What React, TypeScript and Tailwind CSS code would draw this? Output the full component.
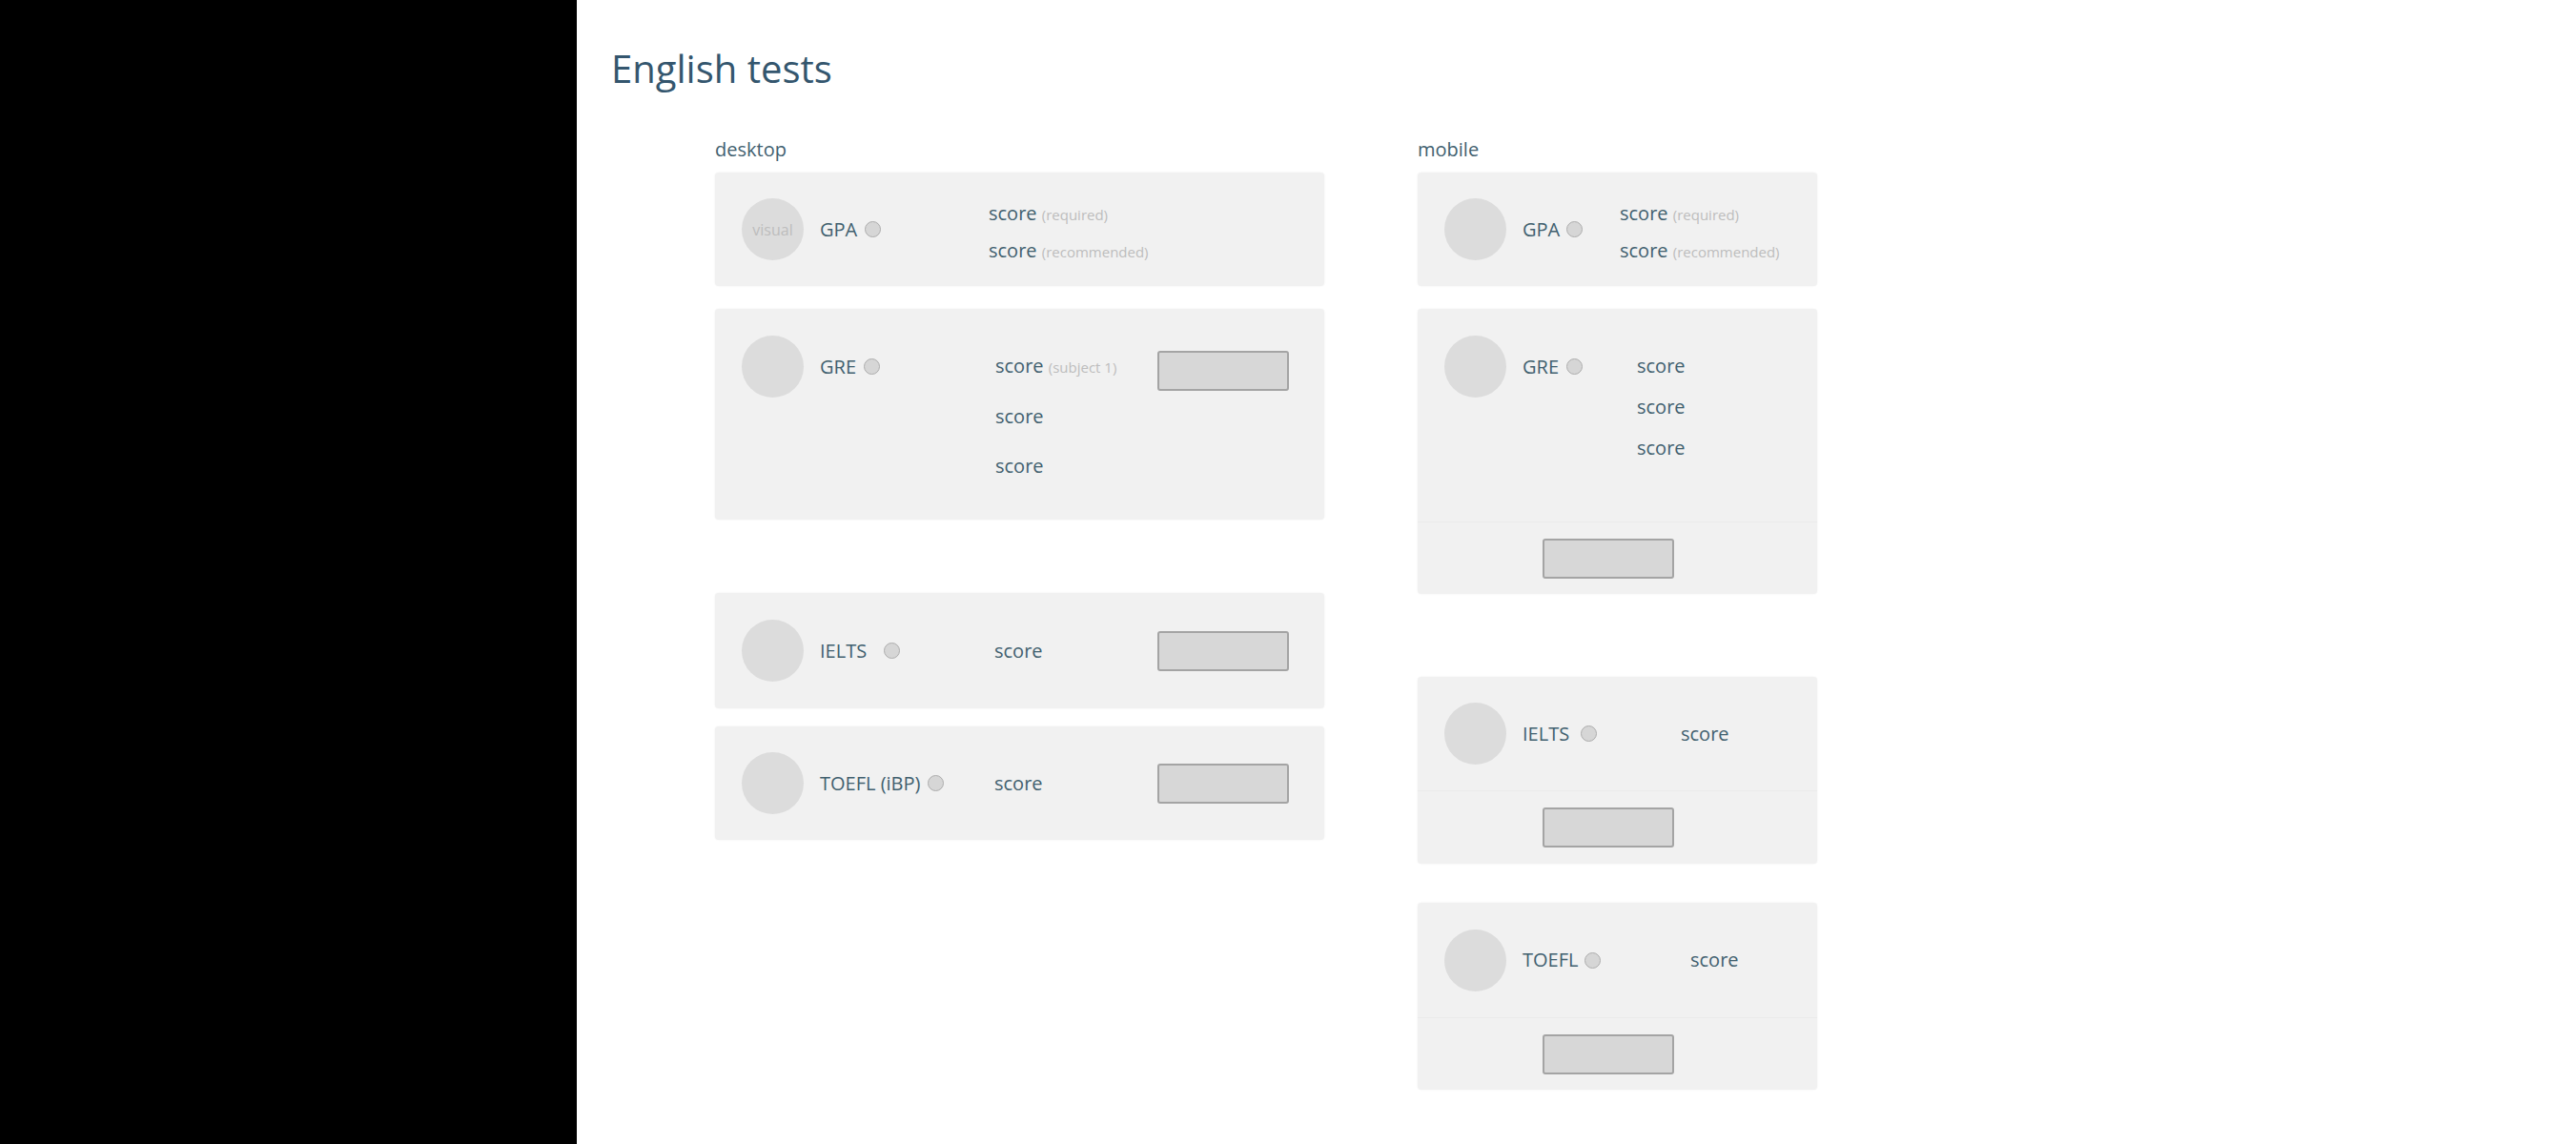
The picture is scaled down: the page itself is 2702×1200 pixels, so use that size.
const ink = "text-[#41606f]";

const Avatar = ({ label }: { label?: string }) => (
  <div className="w-[65px] h-[65px] shrink-0 rounded-full bg-[#dcdcdc] flex items-center justify-center text-[16px] text-[#bdbdbd]">
    {label}
  </div>
);

const Radio = ({ gap }: { gap: string }) => (
  <span className={`${gap} w-[17px] h-[17px] shrink-0 rounded-full bg-[#d6d6d6] border-[1.5px] border-[#adadad]`} />
);

const TestName = ({ name, width, gap = "ml-[8px]" }: { name: string; width: string; gap?: string }) => (
  <div className={`${width} ml-[17px] h-[65px] shrink-0 flex items-center ${ink}`}>
    <span>{name}</span>
    <Radio gap={gap} />
  </div>
);

const Note = ({ children }: { children: string }) => (
  <span className="text-[15px] text-[#bdbdbd]">{children}</span>
);

const Field = ({ extra = "" }: { extra?: string }) => (
  <div className={`${extra} w-[138px] h-[42px] shrink-0 rounded-[3px] bg-[#d7d7d7] border-2 border-[#a4a4a4]`} />
);

const card = "rounded-[4px] bg-[#f1f1f1] shadow-[0_0_2px_rgba(0,0,0,0.08)]";

const Footer = ({ h }: { h: string }) => (
  <div className={`${h} flex items-center pl-[131px] border-t border-[#ebebeb]`}>
    <Field />
  </div>
);

const Desktop = () => (
  <section className="w-[639px]">
    <div className={`text-[20px] leading-[24px] h-[24px] ${ink}`}>desktop</div>

    <div className={`${card} mt-[12px] h-[119px] flex items-center pl-[28px] pr-[37px]`}>
      <Avatar label="visual" />
      <TestName name="GPA" width="w-[177px]" />
      <div className={`pt-[7px] leading-[38px] ${ink}`}>
        <div>
          score <Note>(required)</Note>
        </div>
        <div>
          score <Note>(recommended)</Note>
        </div>
      </div>
    </div>

    <div className={`${card} mt-[24px] h-[221px] flex items-start pt-[28px] pl-[28px] pr-[37px]`}>
      <Avatar />
      <TestName name="GRE" width="w-[184px]" />
      <div className={`mt-[6px] leading-[52px] ${ink}`}>
        <div>
          score <Note>(subject 1)</Note>
        </div>
        <div>score</div>
        <div>score</div>
      </div>
      <Field extra="ml-auto mt-[16px]" />
    </div>

    <div className={`${card} mt-[77px] h-[121px] flex items-center pl-[28px] pr-[37px]`}>
      <Avatar />
      <TestName name="IELTS" width="w-[183px]" gap="ml-[18px]" />
      <div className={ink}>score</div>
      <Field extra="ml-auto" />
    </div>

    <div className={`${card} mt-[19px] h-[119px] flex items-center pl-[28px] pr-[37px]`}>
      <Avatar />
      <TestName name="TOEFL (iBP)" width="w-[183px]" />
      <div className={ink}>score</div>
      <Field extra="ml-auto" />
    </div>
  </section>
);

const Mobile = () => (
  <section className="w-[419px]">
    <div className={`text-[20px] leading-[24px] h-[24px] ${ink}`}>mobile</div>

    <div className={`${card} mt-[12px] h-[119px] flex items-center pl-[28px]`}>
      <Avatar />
      <TestName name="GPA" width="w-[102px]" gap="ml-[7px]" />
      <div className={`pt-[6px] leading-[37px] ${ink}`}>
        <div>
          score <Note>(required)</Note>
        </div>
        <div>
          score <Note>(recommended)</Note>
        </div>
      </div>
    </div>

    <div className={`${card} mt-[24px]`}>
      <div className="h-[223px] flex items-start pt-[28px] pl-[28px]">
        <Avatar />
        <TestName name="GRE" width="w-[120px]" />
        <div className={`mt-[10px] leading-[43px] ${ink}`}>
          <div>score</div>
          <div>score</div>
          <div>score</div>
        </div>
      </div>
      <Footer h="h-[76px]" />
    </div>

    <div className={`${card} mt-[87px]`}>
      <div className="h-[119px] flex items-center pl-[28px]">
        <Avatar />
        <TestName name="IELTS" width="w-[166px]" gap="ml-[12px]" />
        <div className={ink}>score</div>
      </div>
      <Footer h="h-[77px]" />
    </div>

    <div className={`${card} mt-[41px]`}>
      <div className="h-[120px] flex items-center pl-[28px]">
        <Avatar />
        <TestName name="TOEFL" width="w-[176px]" gap="ml-[7px]" />
        <div className={ink}>score</div>
      </div>
      <Footer h="h-[76px]" />
    </div>
  </section>
);

export default function App() {
  return (
    <div className="flex min-h-screen font-['Open_Sans',sans-serif] text-[20px]">
      <div className="w-[605px] shrink-0 bg-black" />
      <main className="flex-1 bg-white pl-[36px] pt-[52px]">
        <h1 className="text-[40px] leading-none font-normal text-[#34566e]">English tests</h1>
        <div className="mt-[53px] ml-[109px] flex gap-[98px]">
          <Desktop />
          <Mobile />
        </div>
      </main>
    </div>
  );
}
